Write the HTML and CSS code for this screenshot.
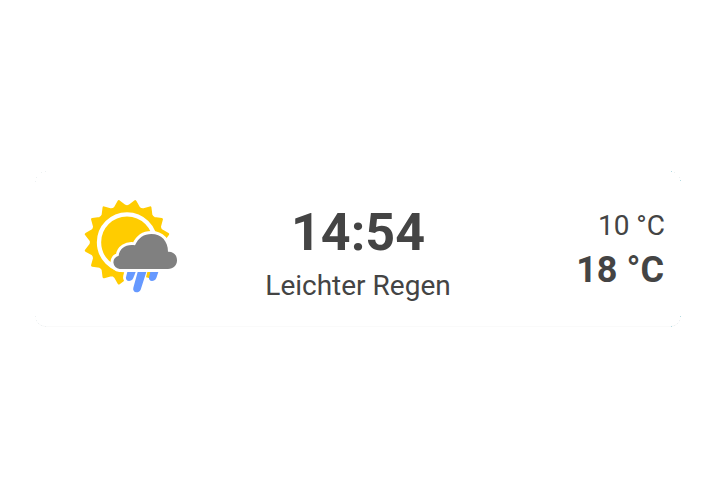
FILE: index.html
```html
<!DOCTYPE html>
<html lang="de">
<head>
<meta charset="utf-8">
<title>Wetter</title>
<link rel="stylesheet" href="styles.css">
</head>
<body>
<main class="card">
  <svg class="icon" viewBox="0 0 345 345" aria-hidden="true">
    <path id="sun" class="sun" d=""/>
    <circle class="ring" cx="156" cy="157" r="84"/>
    <path class="gap rain-gap" d="M169 240 163 262M199 240 185 295"/>
    <path class="gap" d="M134 237A20 20 0 0 1 131 197.500C133 175 154 161 180 166C190 143 207 132 229 132C259 132 279 153 279 185C296 184 306 196 306 211C306 227 295 237 279 237Z"/>
    <path class="cloud" d="M134 237A20 20 0 0 1 131 197.500C133 175 154 161 180 166C190 143 207 132 229 132C259 132 279 153 279 185C296 184 306 196 306 211C306 227 295 237 279 237Z"/>
    <path class="rain" d="M157 246H182L175 264C172 271 167 273 162 273C155 273 152 268 153 262Z"/>
    <path class="rain" d="M188 246H214L197 299C194 305 190 307 184 307C177 306 173 300 175 293Z"/>
    <path class="rain" d="M226 246H250L244 264C241 271 236 273 231 273C224 273 221 268 222 262Z"/>
  </svg>
  <section class="current">
    <div class="time">14:54</div>
    <div class="condition">Leichter Regen</div>
  </section>
  <section class="temps">
    <div class="low">10 °C</div>
    <div class="high">18 °C</div>
  </section>
  <svg class="corners" viewBox="0 0 646 157" aria-hidden="true">
    <path class="faint" d="M0 11h1v1h-1zM1 7h1v1h-1zM6 2h1v1h-1zM10 1h1v1h-1zM0 146h1v1h-1zM1 150h1v1h-1zM3 153h1v1h-1zM6 155h1v1h-1zM10 156h1v1h-1zM639 2h1v1h-1zM644 7h1v1h-1zM639 155h1v1h-1zM642 153h1v1h-1zM644 150h1v1h-1z"/>
    <path class="accent" d="M636 1h1v1h-1zM645 10h1v1h-1zM645 146h1v1h-1zM636 156h1v1h-1z"/>
  </svg>
</main>
<script src="sun.js"></script>
</body>
</html>
```
FILE: styles.css
```css
* { box-sizing: border-box; }
body {
  margin: 0;
  height: 497px;
  background: #fff;
  color: #444;
  font-family: Roboto, sans-serif;
  padding: 170px 39px 0 35px;
}
.card {
  position: relative;
  display: grid;
  grid-template-columns: 155px 1fr 155px;
  height: 157px;
  border-radius: 11px;
  background: #fff;
  border-bottom: 1px solid #fafafa;
}
.icon { width: 115px; height: 115px; margin: 20px 0 0 40px; }
.sun { fill: #fc0; stroke: #fc0; stroke-width: 8; stroke-linejoin: round; }
.ring { fill: none; stroke: #fff; stroke-width: 13; }
.gap { fill: #fff; stroke: #fff; stroke-width: 18; stroke-linejoin: round; }
.rain-gap { fill: none; stroke-width: 38; stroke-linecap: round; }
.cloud { fill: #808080; }
.rain { fill: #69f; }
.corners { position: absolute; inset: 0; width: 646px; height: 157px; }
.faint { fill: #edf1f2; }
.accent { fill: #b5dbe2; }
.current { text-align: center; padding-top: 32px; white-space: nowrap; }
.time { font-size: 52px; font-weight: 700; line-height: 62px; }
.condition { font-size: 28px; line-height: 34px; margin-top: 5px; }
.temps { text-align: right; padding: 39px 16px 0 0; white-space: nowrap; }
.low { font-size: 28px; line-height: 34px; }
.high { font-size: 36px; font-weight: 700; line-height: 42px; margin: 6px 1px 0 0; }
```
FILE: sun.js
```js
// Sixteen tapering rays with softly rounded valleys between them.
const point = (radius, degrees) => {
  const a = degrees * Math.PI / 180;
  return (156 + radius * Math.cos(a)).toFixed(1) + " " + (157 + radius * Math.sin(a)).toFixed(1);
};
let d = "M" + point(125, 11.25 - 22.5);
for (let i = 0; i < 16; i++) {
  const c = i * 22.5;
  d += "L" + point(109, c - 3.5) + "Q" + point(106, c) + " " + point(109, c + 3.5) + "L" + point(125, c + 11.25);
}
document.getElementById("sun").setAttribute("d", d + "Z");
```
